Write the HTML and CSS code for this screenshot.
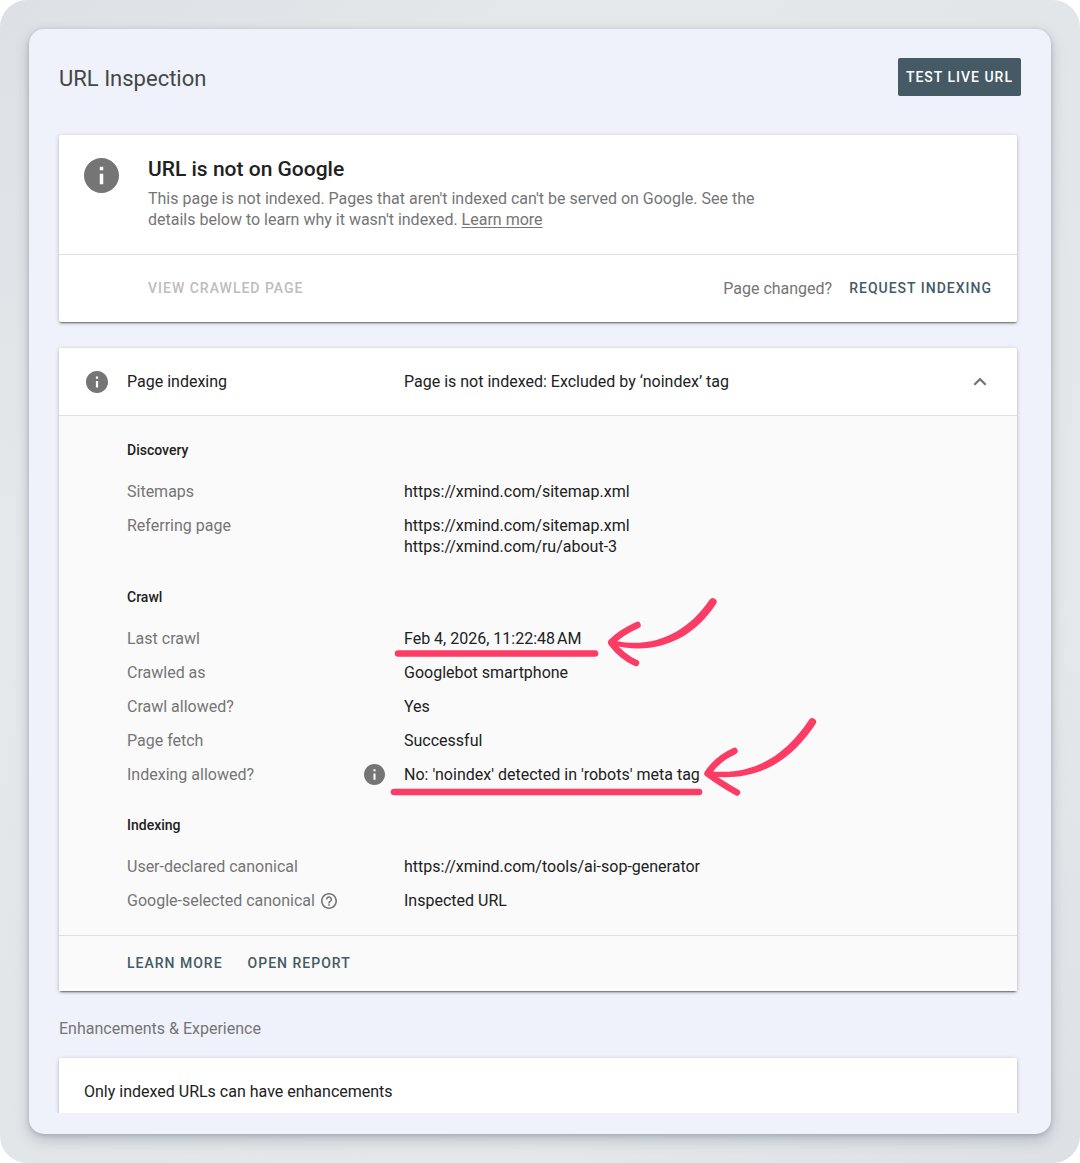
FILE: index.html
```html
<!DOCTYPE html>
<html lang="en">
<head>
    <meta charset="UTF-8">
    <meta name="viewport" content="width=device-width, initial-scale=1.0">
    <title>URL Inspection</title>
    <link rel="stylesheet" href="styles.css">
</head>
<body>
    <svg class="sprite" aria-hidden="true">
        <symbol id="info" viewBox="2 2 20 20">
            <path d="M12 2C6.48 2 2 6.48 2 12s4.48 10 10 10 10-4.48 10-10S17.52 2 12 2zm1 15h-2v-6h2v6zm0-8h-2V7h2v2z"/>
        </symbol>
        <symbol id="help" viewBox="2 2 20 20">
            <path d="M11 18h2v-2h-2v2zm1-16C6.48 2 2 6.48 2 12s4.48 10 10 10 10-4.48 10-10S17.52 2 12 2zm0 18c-4.41 0-8-3.59-8-8s3.59-8 8-8 8 3.59 8 8-3.59 8-8 8zm0-14c-2.21 0-4 1.79-4 4h2c0-1.1.9-2 2-2s2 .9 2 2c0 2-3 1.75-3 5h2c0-2.25 3-2.5 3-5 0-2.21-1.79-4-4-4z"/>
        </symbol>
    </svg>

    <div class="backdrop">
        <main class="panel">
            <header class="top">
                <h1>URL Inspection</h1>
                <button type="button" class="btn-primary">TEST LIVE URL</button>
            </header>

            <section class="card verdict">
                <div class="verdict-info">
                    <svg class="icon icon-large" aria-hidden="true"><use href="#info"/></svg>
                    <div>
                        <h2>URL is not on Google</h2>
                        <p>This page is not indexed. Pages that aren't indexed can't be served on Google. See the details below to learn why it wasn't indexed. <a href="#">Learn more</a></p>
                    </div>
                </div>
                <div class="verdict-actions">
                    <button type="button" class="btn-text" disabled>VIEW CRAWLED PAGE</button>
                    <span class="changed">Page changed?</span>
                    <button type="button" class="btn-text">REQUEST INDEXING</button>
                </div>
            </section>

            <section class="card indexing">
                <button type="button" class="indexing-head" aria-expanded="true">
                    <svg class="icon icon-medium" aria-hidden="true"><use href="#info"/></svg>
                    <span class="head-label">Page indexing</span>
                    <span class="head-value">Page is not indexed: Excluded by ‘noindex’ tag</span>
                    <svg class="icon chevron" viewBox="0 0 24 24" aria-hidden="true"><path d="M12 7.500l-6.500 6.500 1.600 1.600L12 10.700l4.900 4.900L18.500 14z"/></svg>
                </button>

                <div class="details">
                    <section>
                        <h3>Discovery</h3>
                        <dl>
                            <dt>Sitemaps</dt>
                            <dd>https://xmind.com/sitemap.xml</dd>
                            <dt>Referring page</dt>
                            <dd>https://xmind.com/sitemap.xml<br>https://xmind.com/ru/about-3</dd>
                        </dl>
                    </section>
                    <section>
                        <h3>Crawl</h3>
                        <dl>
                            <dt>Last crawl</dt>
                            <dd>Feb 4, 2026, 11:22:48&#8239;AM
                                <svg class="mark mark-crawl" viewBox="0 0 340 90" aria-hidden="true">
                                    <path class="underline" d="M8 63.5H205"/>
                                    <path class="head" d="M247.5 35Q230 43 221 52.5Q232 67 246 73"/>
                                    <path d="M222 50C262 60 297 43 319.500 10A3.800 3.800 0 0 1 326 14C302 50 266 66 221 55Z"/>
                                </svg>
                            </dd>
                            <dt>Crawled as</dt>
                            <dd>Googlebot smartphone</dd>
                            <dt>Crawl allowed?</dt>
                            <dd>Yes</dd>
                            <dt>Page fetch</dt>
                            <dd>Successful</dd>
                            <dt>Indexing allowed? <svg class="icon icon-row" aria-hidden="true"><use href="#info"/></svg></dt>
                            <dd>No: 'noindex' detected in 'robots' meta tag
                                <svg class="mark mark-noindex" viewBox="0 0 440 100" aria-hidden="true">
                                    <path class="underline" d="M4 82H309"/>
                                    <path class="head" d="M344.500 41Q327 49 317.500 63.500Q330 73 347 82.500"/>
                                    <path d="M319 61C360 66 393 49 419 10A3.800 3.800 0 0 1 425.500 14C398 56 362 72 318 66Z"/>
                                </svg>
                            </dd>
                        </dl>
                    </section>
                    <section>
                        <h3>Indexing</h3>
                        <dl>
                            <dt>User-declared canonical</dt>
                            <dd>https://xmind.com/tools/ai-sop-generator</dd>
                            <dt class="with-help">Google-selected canonical <svg class="icon icon-help" aria-hidden="true"><use href="#help"/></svg></dt>
                            <dd>Inspected URL</dd>
                        </dl>
                    </section>
                </div>

                <div class="indexing-actions">
                    <button type="button" class="btn-text">LEARN MORE</button>
                    <button type="button" class="btn-text">OPEN REPORT</button>
                </div>
            </section>

            <h2 class="group-title">Enhancements &amp; Experience</h2>
            <section class="card enhancements">Only indexed URLs can have enhancements</section>
        </main>
    </div>
</body>
</html>
```
FILE: styles.css
```css
* {
    box-sizing: border-box;
}
body {
    margin: 0;
    background-color: #fff;
    color: #212121;
    font-family: Roboto, Arial, sans-serif;
    font-size: 16px;
    line-height: 21px;
}
h1, h2, h3, p, dl, dd {
    margin: 0;
}
button {
    padding: 0;
    border: none;
    background: none;
    color: inherit;
    font: inherit;
    cursor: pointer;
}
.sprite {
    display: none;
}
.backdrop {
    padding: 29px;
    border-radius: 27px;
    background: linear-gradient(135deg, #dde1e6, #e4e8ea 25%, #e2e6e9 50%, #e4e8ea 75%, #dde1e6);
}
.panel {
    padding: 29px 30px 21px;
    border-radius: 15px;
    background-color: #eff2fa;
    box-shadow: 0 1px 4px rgba(60, 70, 90, 0.25), 0 6px 14px rgba(60, 70, 90, 0.25);
}
.top {
    display: flex;
    justify-content: space-between;
    align-items: center;
    margin-bottom: 39px;
}
h1 {
    padding-top: 4px;
    color: #444746;
    font-size: 22px;
    font-weight: 400;
    line-height: 28px;
}
.btn-primary {
    height: 38px;
    padding: 0 8px;
    border-radius: 2px;
    background-color: #455a64;
    color: #fff;
    font-size: 14px;
    font-weight: 500;
    letter-spacing: 1px;
}
.btn-text {
    color: #455a64;
    font-size: 14px;
    font-weight: 500;
    letter-spacing: 1px;
}
.btn-text:disabled {
    color: #bdbdbd;
    cursor: default;
}
.card {
    margin-right: 4px;
    border-radius: 2px;
    background-color: #fff;
    box-shadow: 0 2px 2px -1px rgba(0, 0, 0, 0.5), 0 1px 4px rgba(0, 0, 0, 0.22);
}
.icon {
    flex: none;
    fill: #757575;
}

/* verdict */
.verdict {
    margin-bottom: 26px;
}
.verdict-info {
    display: flex;
    gap: 29px;
    padding: 20px 25px 24px;
    border-bottom: 1px solid #e0e0e0;
}
.icon-large {
    width: 35px;
    height: 35px;
    margin-top: 3px;
}
.verdict h2 {
    margin-bottom: 5px;
    font-size: 21px;
    font-weight: 500;
    line-height: 28px;
}
.verdict p {
    max-width: 620px;
    color: #757575;
}
.verdict a {
    color: inherit;
    text-underline-offset: 2px;
}
.verdict-actions {
    display: flex;
    align-items: center;
    height: 67px;
    padding: 0 25px 0 89px;
}
.changed {
    margin: 0 17px 0 auto;
    color: #757575;
}

/* page indexing */
.indexing-head {
    display: flex;
    align-items: center;
    width: 100%;
    height: 68px;
    padding: 0 25px 0 27px;
    border-bottom: 1px solid #e0e0e0;
    text-align: left;
}
.icon-medium {
    width: 22px;
    height: 22px;
    margin-right: 19px;
}
.head-label {
    width: 277px;
}
.head-value {
    flex: 1;
}
.chevron {
    width: 24px;
    height: 24px;
}
.details {
    display: flex;
    flex-direction: column;
    gap: 30px;
    padding: 24px 25px 24px 68px;
    background-color: #fafafa;
}
h3 {
    margin-bottom: 20px;
    font-size: 14px;
    font-weight: 500;
}
dl {
    display: grid;
    grid-template-columns: 277px 1fr;
    row-gap: 13px;
}
dt {
    display: flex;
    justify-content: space-between;
    padding-right: 19px;
    color: #757575;
}
dd {
    position: relative;
}
.icon-row {
    width: 21px;
    height: 21px;
}
.with-help {
    justify-content: flex-start;
    align-items: center;
    gap: 6px;
}
.icon-help {
    width: 16px;
    height: 16px;
}
.indexing-actions {
    display: flex;
    align-items: center;
    gap: 25px;
    height: 56px;
    padding: 0 68px;
    border-top: 1px solid #e0e0e0;
    background-color: #fafafa;
}

/* hand-drawn marks over the values */
.mark {
    position: absolute;
    left: -14px;
    fill: #fc3c64;
    pointer-events: none;
}
.mark-crawl {
    top: -38px;
    width: 340px;
    height: 90px;
}
.mark-noindex {
    top: -54px;
    width: 440px;
    height: 100px;
}
.underline, .head {
    fill: none;
    stroke: #fc3c64;
    stroke-width: 6.5;
    stroke-linecap: round;
    stroke-linejoin: round;
}

.group-title {
    margin: 27px 0 19px;
    color: #757575;
    font-size: 16px;
    font-weight: 400;
}
.enhancements {
    padding: 23px 25px 11px;
    border-radius: 2px 2px 0 0;
    clip-path: inset(-5px -5px 0);
}
```
